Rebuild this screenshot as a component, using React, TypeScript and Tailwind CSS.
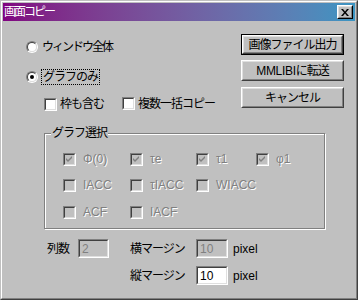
import React from 'react';

function Radio({ checked }: { checked?: boolean }) {
  return (
    <span className="relative inline-block w-[12px] h-[12px] shrink-0 rounded-full border border-t-[#808080] border-l-[#808080] border-r-white border-b-white">
      <span className="absolute inset-0 rounded-full border border-t-[#404040] border-l-[#404040] border-r-[#dfdfdf] border-b-[#dfdfdf] bg-white" />
      {checked && <span className="absolute left-[3px] top-[3px] w-[4px] h-[4px] rounded-full bg-black" />}
    </span>
  );
}

function CheckBox({ checked, disabled }: { checked?: boolean; disabled?: boolean }) {
  return (
    <span className="inline-block w-[13px] h-[13px] shrink-0 border border-t-[#808080] border-l-[#808080] border-r-white border-b-white">
      <span
        className={
          'flex items-center justify-center w-full h-full border border-t-[#404040] border-l-[#404040] border-r-[#dfdfdf] border-b-[#dfdfdf] ' +
          (disabled ? 'bg-[#c0c0c0]' : 'bg-white')
        }
      >
        {checked && (
          <svg width="7" height="7" viewBox="0 0 7 7">
            <path d="M0 2 L2 4 L6 0 L6 2 L2 6 L0 4 Z" fill={disabled ? '#808080' : '#000'} />
          </svg>
        )}
      </span>
    </span>
  );
}

function Button({ children, isDefault }: { children: React.ReactNode; isDefault?: boolean }) {
  return (
    <div className={'h-[21px] w-[103px] ' + (isDefault ? 'border border-black' : '')}>
      <div className="h-full w-full border border-t-white border-l-white border-r-[#404040] border-b-[#404040]">
        <div className="h-full w-full flex items-center justify-center border border-t-[#dfdfdf] border-l-[#dfdfdf] border-r-[#808080] border-b-[#808080] text-[12px] text-black tracking-[-1px]">
          {children}
        </div>
      </div>
    </div>
  );
}

function Field({ value, disabled, width }: { value: string; disabled?: boolean; width: string }) {
  return (
    <div className={'h-[19px] border border-t-[#808080] border-l-[#808080] border-r-white border-b-white ' + width}>
      <div
        className={
          'h-full w-full flex items-center pl-[2px] border border-t-[#404040] border-l-[#404040] border-r-[#dfdfdf] border-b-[#dfdfdf] text-[12px] ' +
          (disabled ? 'bg-[#c0c0c0] text-[#808080]' : 'bg-white text-black')
        }
      >
        {value}
      </div>
    </div>
  );
}

const graphRows = [
  [
    { label: 'Φ(0)', checked: true },
    { label: 'τe', checked: true },
    { label: 'τ1', checked: true },
    { label: 'φ1', checked: true },
  ],
  [
    { label: 'IACC' },
    { label: 'τIACC' },
    { label: 'WIACC' },
  ],
  [
    { label: 'ACF' },
    { label: 'IACF' },
  ],
];

const colWidths = ['w-[67px]', 'w-[66px]', 'w-[60px]', 'w-[60px]'];

export default function App() {
  return (
    <div className="w-[358px] h-[300px] bg-[#c0c0c0] border border-t-[#c0c0c0] border-l-[#c0c0c0] border-r-[#404040] border-b-[#404040] [font-family:'Liberation_Sans','Noto_Sans_CJK_JP',sans-serif] text-[12px] leading-none select-none">
      <div className="h-full w-full border border-t-white border-l-white border-r-[#808080] border-b-[#808080] p-[1px] flex flex-col">
        {/* Title bar */}
        <div className="h-[18px] flex items-center justify-between pl-[1px] pr-[2px] bg-gradient-to-r from-[#800080] to-[#3a95c2]">
          <span className="text-white text-[12px] tracking-[-2px]">画面コピー</span>
          <div className="w-[16px] h-[14px] border border-t-white border-l-white border-r-black border-b-black bg-[#c0c0c0]">
            <div className="h-full w-full flex items-center justify-center border border-t-[#dfdfdf] border-l-[#dfdfdf] border-r-[#808080] border-b-[#808080]">
              <svg width="8" height="7" viewBox="0 0 8 7">
                <path d="M0 0 H2 L4 2.5 L6 0 H8 L5 3.5 L8 7 H6 L4 4.5 L2 7 H0 L3 3.5 Z" fill="#000" />
              </svg>
            </div>
          </div>
        </div>

        {/* Body */}
        <div className="flex-1 flex flex-col">
          <div className="flex pt-[13px]">
            <div className="flex-1 pl-[23px] flex flex-col">
              <div className="mt-[5px] h-[16px] flex items-center gap-[4px]">
                <Radio />
                <span className="tracking-[-2px]">ウィンドウ全体</span>
              </div>
              <div className="mt-[14px] h-[16px] flex items-center gap-[3px]">
                <Radio checked />
                <span className="border border-dotted border-black px-[1px] py-[1px] tracking-[-1px]">グラフのみ</span>
              </div>
              <div className="mt-[11px] h-[16px] flex items-center pl-[18px]">
                <CheckBox />
                <span className="ml-[3px] tracking-[-1px]">枠も含む</span>
                <span className="ml-[18px]"><CheckBox /></span>
                <span className="ml-[3px] tracking-[-1px]">複数一括コピー</span>
              </div>
            </div>
            <div className="mr-[11px] flex flex-col">
              <Button isDefault>画像ファイル出力</Button>
              <div className="mt-[5px]">
                <Button>
                  <span className="tracking-[-0.3px]">MMLIBI</span>
                  <span>に転送</span>
                </Button>
              </div>
              <div className="mt-[6px]"><Button>キャンセル</Button></div>
            </div>
          </div>

          {/* グラフ選択 group */}
          <div className="relative mt-[21px] ml-[41px] w-[281px] h-[96px] border border-[#808080] shadow-[inset_1px_1px_0_#fff,1px_1px_0_#fff]">
            <span className="absolute left-[6px] top-[-7px] bg-[#c0c0c0] px-[1px] tracking-[-1px]">グラフ選択</span>
            <div className="flex flex-col pt-[17px] pl-[18px] gap-[10px]">
              {graphRows.map((row, r) => (
                <div key={r} className={'h-[16px] flex items-center ' + (r === 2 ? 'mt-[1px]' : '')}>
                  {row.map((item, c) => (
                    <div key={c} className={'flex items-center ' + colWidths[c]}>
                      <CheckBox checked={item.checked} disabled />
                      <span className="ml-[7px] whitespace-nowrap text-[#808080] [text-shadow:1px_1px_0_#fff]">{item.label}</span>
                    </div>
                  ))}
                </div>
              ))}
            </div>
          </div>

          {/* Bottom fields */}
          <div className="mt-[10px] ml-[44px] flex items-center h-[19px]">
            <span className="w-[31px] tracking-[-1px]">列数</span>
            <Field value="2" disabled width="w-[31px]" />
            <span className="w-[21px]" />
            <span className="w-[66px] tracking-[-1px]">横マージン</span>
            <Field value="10" disabled width="w-[32px]" />
            <span className="ml-[5px]">pixel</span>
          </div>
          <div className="mt-[8px] ml-[127px] flex items-center h-[19px]">
            <span className="w-[66px] tracking-[-1px]">縦マージン</span>
            <Field value="10" width="w-[32px]" />
            <span className="ml-[5px]">pixel</span>
          </div>
        </div>
      </div>
    </div>
  );
}
